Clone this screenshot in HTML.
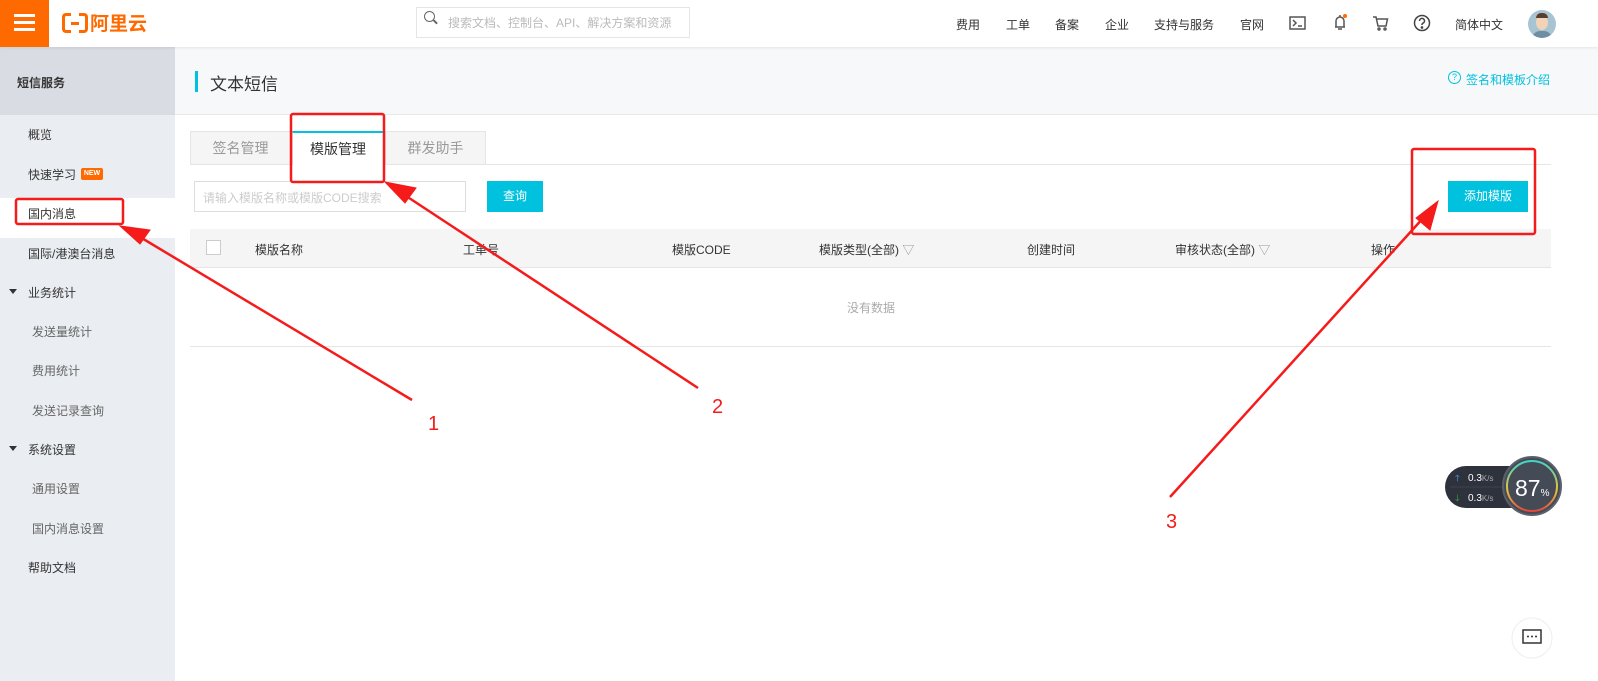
<!DOCTYPE html>
<html><head><meta charset="utf-8"><style>
*{margin:0;padding:0;box-sizing:border-box}
body{width:1598px;height:681px;overflow:hidden;font-family:"Liberation Sans","Noto Sans CJK SC",sans-serif;font-size:12px;color:#333;background:#fff;position:relative}
.abs{position:absolute}
.top{left:0;top:0;width:1598px;height:47px;background:#fff;box-shadow:0 1px 3px rgba(0,0,0,.08);z-index:2}
.nav{top:16px;font-size:12px;color:#333}
.side{left:0;top:47px;width:175px;height:634px;background:#eaedf1}
.sh{left:0;top:47px;width:175px;height:68px;background:#d9dde3}
.si{left:28px;font-size:12px;color:#333}
.sub{left:32px;color:#666}
.tab{top:131px;height:34px;border:1px solid #e5e5e5;background:#f5f5f5;color:#999;font-size:14px;text-align:center;line-height:32px}
.th{top:241px;font-size:12px;color:#333}
</style></head><body>
<div class="abs top">
 <div class="abs" style="left:0;top:0;width:49px;height:47px;background:#ff6a00"></div>
 <div class="abs" style="left:14px;top:14px;width:21px;height:3px;background:#fff"></div>
 <div class="abs" style="left:14px;top:21px;width:21px;height:3px;background:#fff"></div>
 <div class="abs" style="left:14px;top:28px;width:21px;height:3px;background:#fff"></div>
 <div class="abs" style="left:62px;top:13px;width:9px;height:20px;border:3px solid #ff6a00;border-right:none;border-radius:4px 0 0 4px"></div>
 <div class="abs" style="left:79px;top:13px;width:9px;height:20px;border:3px solid #ff6a00;border-left:none;border-radius:0 4px 4px 0"></div>
 <div class="abs" style="left:71px;top:22px;width:8px;height:3px;background:#ff6a00"></div>
 <div class="abs" style="left:90px;top:9px;font-size:19px;font-weight:bold;color:#ff6a00">阿里云</div>
 <div class="abs" style="left:416px;top:7px;width:274px;height:31px;border:1px solid #e5e5e5"></div>
 <div class="abs" style="left:424px;top:11px;width:11px;height:11px;border:1.5px solid #666;border-radius:50%"></div>
 <div class="abs" style="left:433px;top:21px;width:5px;height:1.5px;background:#666;transform:rotate(45deg)"></div>
 <div class="abs" style="left:448px;top:14px;color:#bbb;font-size:12px">搜索文档、控制台、API、解决方案和资源</div>
 <div class="abs nav" style="left:956px">费用</div>
 <div class="abs nav" style="left:1006px">工单</div>
 <div class="abs nav" style="left:1055px">备案</div>
 <div class="abs nav" style="left:1105px">企业</div>
 <div class="abs nav" style="left:1154px">支持与服务</div>
 <div class="abs nav" style="left:1240px">官网</div>
 <svg class="abs" style="left:1288px;top:13px" width="20" height="20" viewBox="0 0 20 20" fill="none" stroke="#555" stroke-width="1.5"><rect x="2" y="4" width="15" height="12"/><path d="M5 7l3 3-3 3M10 13h4"/></svg>
 <svg class="abs" style="left:1330px;top:12px" width="20" height="20" viewBox="0 0 20 20" fill="none" stroke="#555" stroke-width="1.5"><path d="M5 15h10M6 15V9a4 4 0 0 1 8 0v6M10 3v2M8 17h4"/><circle cx="15" cy="4" r="2" fill="#ff6a00" stroke="none"/></svg>
 <svg class="abs" style="left:1371px;top:13px" width="20" height="20" viewBox="0 0 20 20" fill="none" stroke="#555" stroke-width="1.5"><path d="M2 4h3l2 9h8l1.5-7H6"/><circle cx="8" cy="16" r="1"/><circle cx="14" cy="16" r="1"/></svg>
 <svg class="abs" style="left:1412px;top:13px" width="20" height="20" viewBox="0 0 20 20" fill="none" stroke="#444" stroke-width="1.5"><circle cx="10" cy="10" r="7.5"/><path d="M7.5 8a2.5 2.5 0 1 1 3.5 2.2c-.8.4-1 1-1 1.8"/><circle cx="10" cy="14.5" r=".6" fill="#444"/></svg>
 <div class="abs nav" style="left:1455px">简体中文</div>
 <div class="abs" style="left:1528px;top:10px;width:28px;height:28px;border-radius:50%;background:#a8c4d2;overflow:hidden"><div class="abs" style="left:8px;top:5px;width:12px;height:15px;border-radius:50%;background:#f3d3b8"></div><div class="abs" style="left:8px;top:3px;width:12px;height:5px;border-radius:5px 5px 0 0;background:#5a3c2c"></div><div class="abs" style="left:4px;top:21px;width:20px;height:10px;border-radius:8px 8px 0 0;background:#6e8fa3"></div></div>
</div>
<div class="abs side"></div>
<div class="abs sh"></div>
<div class="abs" style="left:17px;top:74px;font-size:12px;color:#333;font-weight:bold">短信服务</div>
<div class="abs si" style="top:126px">概览</div>
<div class="abs si" style="top:166px">快速学习</div>
<div class="abs" style="left:81px;top:168px;width:22px;height:12px;background:#ff6a00;border-radius:2px;color:#fff;font-size:7px;font-weight:bold;line-height:12px;text-align:center">NEW</div>
<div class="abs" style="left:0;top:198px;width:175px;height:40px;background:#fff"></div>
<div class="abs si" style="top:205px">国内消息</div>
<div class="abs si" style="top:245px">国际/港澳台消息</div>
<div class="abs" style="left:9px;top:289px;width:0;height:0;border-left:4px solid transparent;border-right:4px solid transparent;border-top:5px solid #333"></div>
<div class="abs si" style="top:284px">业务统计</div>
<div class="abs si sub" style="top:323px">发送量统计</div>
<div class="abs si sub" style="top:362px">费用统计</div>
<div class="abs si sub" style="top:402px">发送记录查询</div>
<div class="abs" style="left:9px;top:446px;width:0;height:0;border-left:4px solid transparent;border-right:4px solid transparent;border-top:5px solid #333"></div>
<div class="abs si" style="top:441px">系统设置</div>
<div class="abs si sub" style="top:480px">通用设置</div>
<div class="abs si sub" style="top:520px">国内消息设置</div>
<div class="abs si" style="top:559px">帮助文档</div>

<div class="abs" style="left:175px;top:47px;width:1423px;height:68px;background:#f7f8fa;border-bottom:1px solid #e8e8e8"></div>
<div class="abs" style="left:195px;top:71px;width:3px;height:21px;background:#00c1de"></div>
<div class="abs" style="left:210px;top:70px;font-size:17px;color:#333">文本短信</div>
<div class="abs" style="left:1448px;top:71px;width:13px;height:13px;border:1px solid #00c1de;border-radius:50%;color:#00c1de;font-size:9px;line-height:11px;text-align:center">?</div>
<div class="abs" style="left:1466px;top:71px;font-size:12px;color:#00c1de">签名和模板介绍</div>

<div class="abs" style="left:190px;top:164px;width:1361px;height:1px;background:#e5e5e5"></div>
<div class="abs tab" style="left:190px;width:101px">签名管理</div>
<div class="abs tab" style="left:292px;width:92px;background:#fff;color:#333;border-top:2px solid #00c1de;border-bottom-color:#fff;height:35px">模版管理</div>
<div class="abs tab" style="left:385px;width:101px">群发助手</div>
<div class="abs" style="left:194px;top:181px;width:272px;height:31px;border:1px solid #ddd"></div>
<div class="abs" style="left:203px;top:189px;color:#ccc;font-size:12px">请输入模版名称或模版CODE搜索</div>
<div class="abs" style="left:487px;top:181px;width:56px;height:31px;background:#00c1de;color:#fff;text-align:center;line-height:31px">查询</div>
<div class="abs" style="left:1448px;top:181px;width:80px;height:31px;background:#00c1de;color:#fff;text-align:center;line-height:31px">添加模版</div>
<div class="abs" style="left:190px;top:229px;width:1361px;height:39px;background:#f5f5f5;border-bottom:1px solid #e5e5e5"></div>
<div class="abs" style="left:206px;top:240px;width:15px;height:15px;border:1px solid #ccc;background:#fff"></div>
<div class="abs th" style="left:255px">模版名称</div>
<div class="abs th" style="left:463px">工单号</div>
<div class="abs th" style="left:672px">模版CODE</div>
<div class="abs th" style="left:819px">模版类型(全部) <span style="color:#999">▽</span></div>
<div class="abs th" style="left:1027px">创建时间</div>
<div class="abs th" style="left:1175px">审核状态(全部) <span style="color:#999">▽</span></div>
<div class="abs th" style="left:1371px">操作</div>
<div class="abs" style="left:847px;top:299px;color:#aaa">没有数据</div>
<div class="abs" style="left:190px;top:346px;width:1361px;height:1px;background:#e5e5e5"></div>

<svg class="abs" style="left:0;top:0" width="1598" height="681">
 <g fill="none" stroke="#f51b1b" stroke-width="2.5">
  <rect x="16" y="199" width="107" height="25" rx="2"/>
  <rect x="291" y="114" width="93" height="68" rx="2"/>
  <rect x="1412" y="149" width="123" height="85" rx="2"/>
 </g>
 <g fill="#f51b1b" stroke="#f51b1b">
  <line x1="412" y1="400" x2="135" y2="234" stroke-width="2.5"/>
  <polygon points="120,226 150,230 140,244" />
  <line x1="698" y1="388" x2="400" y2="192" stroke-width="2.5"/>
  <polygon points="385,182 416,188 405,203"/>
  <line x1="1170" y1="497" x2="1425" y2="216" stroke-width="2.5"/>
  <polygon points="1438,201 1430,230 1416,218"/>
 </g>
 <g fill="#f51b1b" font-family="Liberation Sans" font-size="20">
  <text x="428" y="430">1</text><text x="712" y="413">2</text><text x="1166" y="528">3</text>
 </g>
 <rect x="1445" y="466" width="95" height="42" rx="21" fill="#2d323c"/>
 <line x1="1450" y1="487" x2="1506" y2="487" stroke="#3d434e"/>
 <text x="1455" y="481" fill="#4aa8e8" font-size="9">🡑</text>
 <text x="1468" y="481" fill="#fff" font-size="10" font-family="Liberation Sans">0.3<tspan font-size="8" fill="#aaa">K/s</tspan></text>
 <text x="1455" y="501" fill="#2fb84a" font-size="9">🡓</text>
 <text x="1468" y="501" fill="#fff" font-size="10" font-family="Liberation Sans">0.3<tspan font-size="8" fill="#aaa">K/s</tspan></text>
 <circle cx="1532" cy="486" r="29" fill="#444a56" stroke="#5b616c" stroke-width="2"/>
 <circle cx="1532" cy="486" r="25" fill="none" stroke="url(#g)" stroke-width="2"/>
 <defs><linearGradient id="g" x1="0" y1="0" x2="0" y2="1"><stop offset="0" stop-color="#3fd5c5"/><stop offset=".6" stop-color="#e8c33a"/><stop offset="1" stop-color="#e24a3a"/></linearGradient></defs>
 <text x="1515" y="496" fill="#fff" font-size="23" font-family="Liberation Sans">87<tspan font-size="10">%</tspan></text>
 <circle cx="1532" cy="638" r="20" fill="#fff" stroke="#eee"/>
 <rect x="1523" y="630" width="18" height="13" fill="none" stroke="#333" stroke-width="1.5"/>
 <circle cx="1528" cy="636.5" r="1" fill="#333"/><circle cx="1532" cy="636.5" r="1" fill="#333"/><circle cx="1536" cy="636.5" r="1" fill="#333"/>
</svg>
</body></html>
